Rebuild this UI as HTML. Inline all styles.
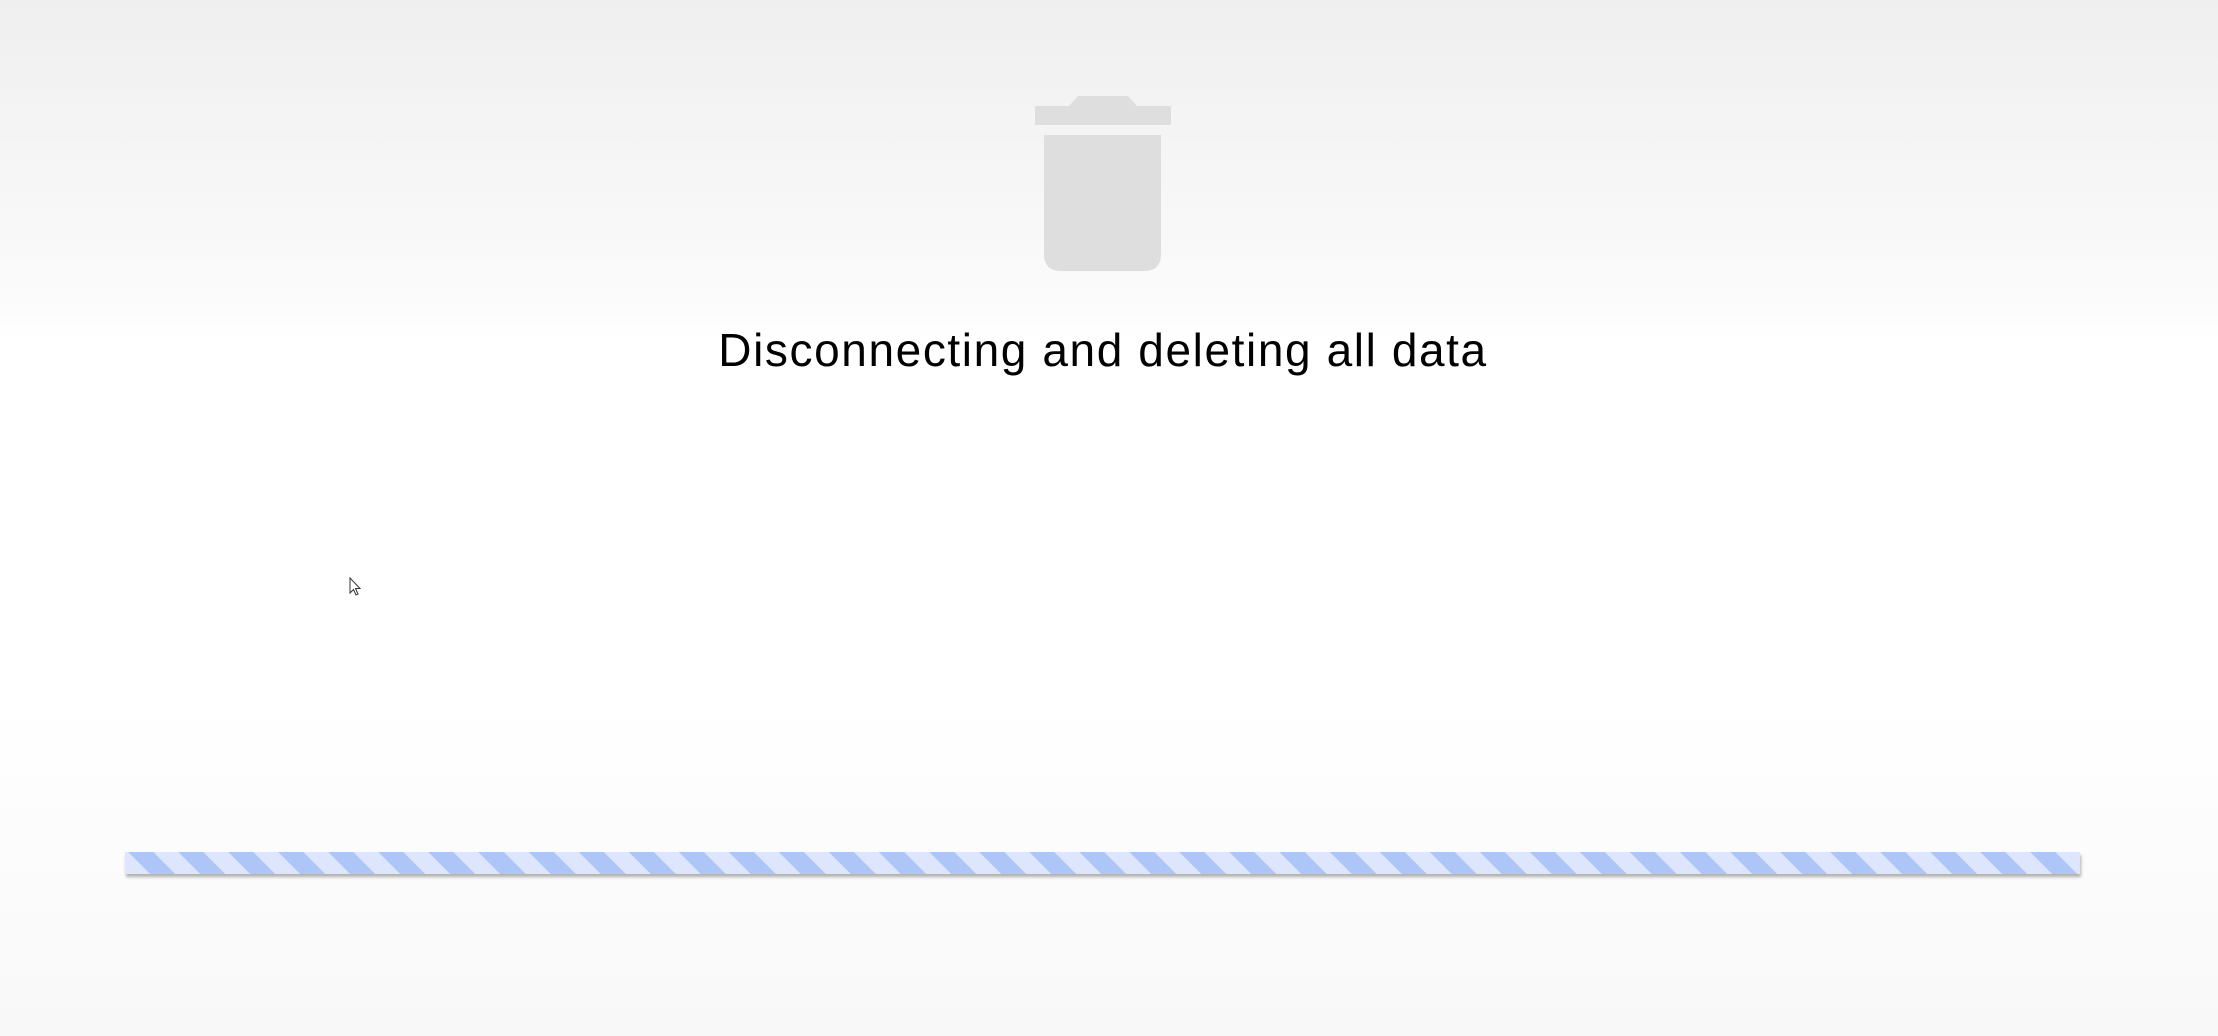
<!DOCTYPE html>
<html><head><meta charset="utf-8"><style>
html,body{margin:0;padding:0;width:2218px;height:1036px;overflow:hidden;font-family:"Liberation Sans",sans-serif;
background:linear-gradient(to bottom,#efefef 0px,#fbfbfb 300px,#fff 340px,#fff 700px,#f8f8f8 1036px);}
.t{position:absolute;left:-6px;width:2218px;top:322px;text-align:center;font-size:46px;letter-spacing:1.6px;color:#000;line-height:56px;}
.bar{position:absolute;left:125px;top:852px;width:1955px;height:22px;
background:repeating-linear-gradient(45deg,#dde6fc 0 17.7px,#adc6f7 17.7px 35.4px);
box-shadow:1px 3px 3px rgba(0,0,0,0.3);}
</style></head><body>
<svg style="position:absolute;left:0;top:0" width="2218" height="300">
<path d="M1035 106H1069L1078 96H1128L1137 106H1171V125H1035Z" fill="#dedede"/>
<path d="M1044 135H1161V254Q1161 271 1144 271H1061Q1044 271 1044 254Z" fill="#dedede"/>
</svg>
<div class="t">Disconnecting and deleting all data</div>
<svg style="position:absolute;left:349px;top:577px" width="14" height="20"><path d="M1 1V16L4.5 12.5L7 18L9 17L6.5 11.5H11Z" fill="#fff" stroke="#333" stroke-width="1"/></svg>
<div class="bar"></div>
</body></html>
